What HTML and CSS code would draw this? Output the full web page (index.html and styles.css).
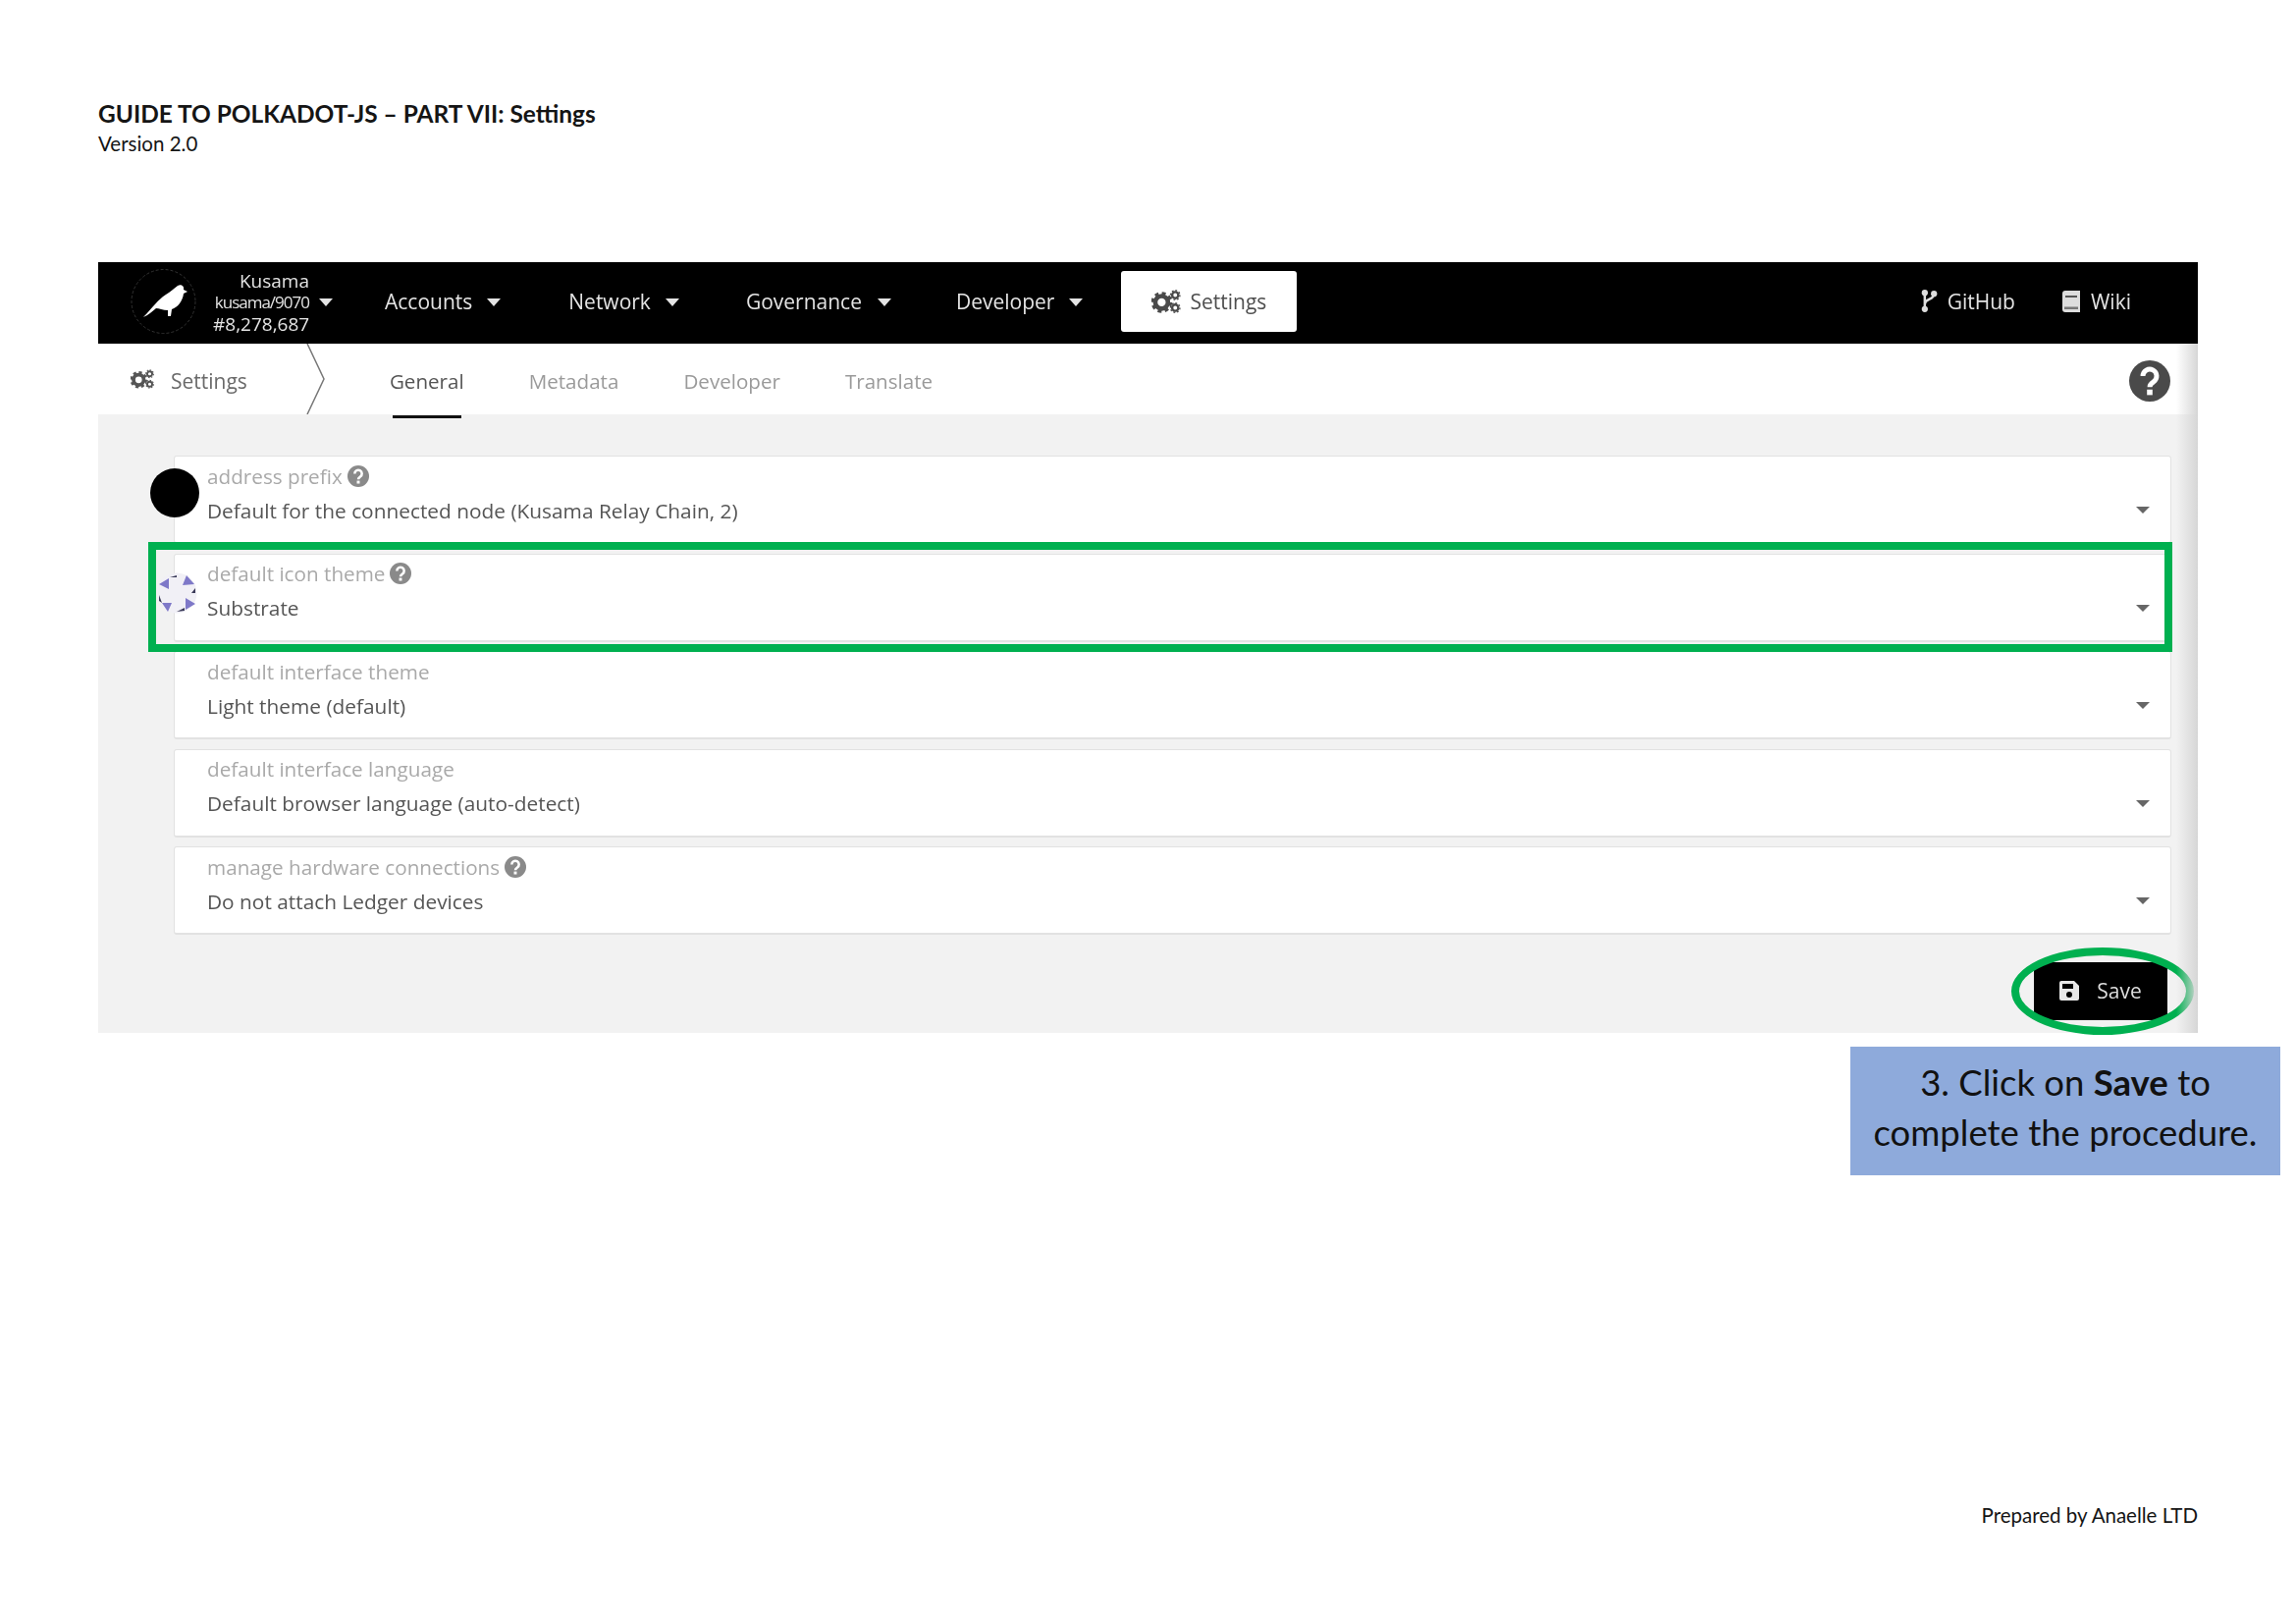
FILE: index.html
```html
<!DOCTYPE html>
<html lang="en">
<head>
<meta charset="utf-8">
<title>Guide to Polkadot-JS</title>
<link rel="stylesheet" href="styles.css">
</head>
<body>
<svg class="defs" width="0" height="0" aria-hidden="true">
  <defs>
    <symbol id="cogs" viewBox="0 0 32 26">
      <circle cx="11" cy="14" r="7" fill="none" stroke="currentColor" stroke-width="5"/>
      <circle cx="11" cy="14" r="10" fill="none" stroke="currentColor" stroke-width="3.4" stroke-dasharray="4.2 3.65"/>
      <circle cx="26" cy="6" r="3.4" fill="none" stroke="currentColor" stroke-width="2.6"/>
      <circle cx="26" cy="6" r="5.2" fill="none" stroke="currentColor" stroke-width="1.4" stroke-dasharray="2 2"/>
      <circle cx="26" cy="20" r="3.4" fill="none" stroke="currentColor" stroke-width="2.6"/>
      <circle cx="26" cy="20" r="5.2" fill="none" stroke="currentColor" stroke-width="1.4" stroke-dasharray="2 2"/>
    </symbol>
    <symbol id="help" viewBox="0 0 24 24">
      <circle cx="12" cy="12" r="12" fill="currentColor"/>
      <path d="M8 9.2a4 4 0 1 1 6.2 3.3c-1.4.9-2.2 1.5-2.2 3" fill="none" stroke="#fff" stroke-width="2.8"/>
      <rect x="10.4" y="17" width="3.2" height="3.2" fill="#fff"/>
    </symbol>
  </defs>
</svg>
<div class="page">
  <header class="doc-head">
    <h1 class="doc-title">GUIDE TO POLKADOT-JS – PART VII: Settings</h1>
    <p class="doc-version">Version 2.0</p>
  </header>

  <section class="app">
    <nav class="topbar">
      <div class="logo">
        <svg class="bird" viewBox="0 0 68 68" aria-hidden="true">
          <circle cx="33.500" cy="34" r="32.500" fill="none" stroke="#333" stroke-width="1" stroke-dasharray="3 2"/>
          <path d="M13 50 C22 41 28 32 36 27 C41 24 44 21 48 18 C52 16 55 19 54 22 L58 24 L54 26 C53 34 48 40 42 42 L41 49 L38 49 L38 43 C33 43 29 41 26 41 C22 44 18 48 13 50 Z" fill="#fff"/>
        </svg>
      </div>
      <div class="chain">
        <span class="chain-name">Kusama</span>
        <span class="chain-version">kusama/9070<i class="caret caret-chain"></i></span>
        <span class="chain-block">#8,278,687</span>
      </div>
      <a class="nav-item nav-accounts">Accounts<i class="caret"></i></a>
      <a class="nav-item nav-network">Network<i class="caret"></i></a>
      <a class="nav-item nav-governance">Governance<i class="caret"></i></a>
      <a class="nav-item nav-developer">Developer<i class="caret"></i></a>
      <a class="nav-active">
        <svg class="nav-cogs"><use href="#cogs"/></svg>Settings
      </a>
      <a class="nav-link nav-github">
        <svg class="icon-fork" viewBox="0 0 16 24" aria-hidden="true">
          <circle cx="4" cy="4" r="3" fill="#ddd"/><circle cx="4" cy="20" r="3" fill="#ddd"/><circle cx="13" cy="5" r="3" fill="#ddd"/>
          <path d="M4 4v16M13 5c0 6-9 5-9 10" fill="none" stroke="#ddd" stroke-width="2.400"/>
        </svg>GitHub
      </a>
      <a class="nav-link nav-wiki">
        <svg class="icon-book" viewBox="0 0 18 22" aria-hidden="true">
          <path d="M3 0h15v22H3a3 3 0 0 1-3-3V3a3 3 0 0 1 3-3z" fill="#ddd"/>
          <rect x="3" y="5" width="12" height="2" fill="#555"/><rect x="2" y="16.500" width="14" height="2.500" fill="#777"/>
        </svg>Wiki
      </a>
    </nav>

    <div class="subbar">
      <svg class="sub-cogs"><use href="#cogs"/></svg>
      <span class="sub-title">Settings</span>
      <svg class="sub-chevron" viewBox="0 0 20 72" aria-hidden="true"><path d="M1 0 L18 36 L1 72" fill="none" stroke="#777" stroke-width="1.500"/></svg>
      <a class="tab tab-current">General</a>
      <a class="tab">Metadata</a>
      <a class="tab">Developer</a>
      <a class="tab">Translate</a>
      <svg class="sub-help"><use href="#help"/></svg>
    </div>

    <div class="content">
      <div class="field">
        <span class="identicon-black"></span>
        <div class="field-text">
          <label class="field-label">address prefix<svg class="help"><use href="#help"/></svg></label>
          <span class="field-value">Default for the connected node (Kusama Relay Chain, 2)</span>
        </div>
        <i class="select-caret"></i>
      </div>
      <div class="field">
        <svg class="identicon-sub" viewBox="0 0 42 42" aria-hidden="true">
          <circle cx="21" cy="21" r="20.500" fill="#f1f0f6"/>
          <path d="M31 3 L27 13 L39 12 Z M13 6 L3 12 L13 17 Z M6 31 L16 31 L12 40 Z M30 26 L40 32 L30 38 Z" fill="#7e78c8"/>
          <path d="M14 5 L21 3 L21 5 Z M36 21 L40 16 L40 21 Z M3 23 L6 31 L3 29 Z M21 40 L29 36 L29 39 Z" fill="#3a3a58"/>
        </svg>
        <div class="field-text">
          <label class="field-label">default icon theme<svg class="help"><use href="#help"/></svg></label>
          <span class="field-value">Substrate</span>
        </div>
        <i class="select-caret"></i>
        <span class="mark-rect"></span>
      </div>
      <div class="field">
        <div class="field-text">
          <label class="field-label">default interface theme</label>
          <span class="field-value">Light theme (default)</span>
        </div>
        <i class="select-caret"></i>
      </div>
      <div class="field">
        <div class="field-text">
          <label class="field-label">default interface language</label>
          <span class="field-value">Default browser language (auto-detect)</span>
        </div>
        <i class="select-caret"></i>
      </div>
      <div class="field">
        <div class="field-text">
          <label class="field-label">manage hardware connections<svg class="help"><use href="#help"/></svg></label>
          <span class="field-value">Do not attach Ledger devices</span>
        </div>
        <i class="select-caret"></i>
      </div>
      <div class="actions">
        <button class="save" type="button">
          <svg class="icon-save" viewBox="0 0 20 20" aria-hidden="true">
            <path d="M2 0h13l5 5v13a2 2 0 0 1-2 2H2a2 2 0 0 1-2-2V2a2 2 0 0 1 2-2z" fill="#e8e8e8"/>
            <rect x="3" y="3" width="11" height="5" fill="#000"/><circle cx="10" cy="14" r="3" fill="#000"/>
          </svg>Save
          <span class="mark-ellipse"></span>
        </button>
      </div>
    </div>
  </section>

  <div class="callout-row">
    <p class="callout">3. Click on <b>Save</b> to<br>complete the procedure.</p>
  </div>

  <footer class="doc-foot">Prepared by Anaelle LTD</footer>
</div>
</body>
</html>
```
FILE: styles.css
```css
* { box-sizing: border-box; }
html, body { margin: 0; padding: 0; background: #fff; }
body { width: 2339px; height: 1654px; overflow: hidden; font-family: "Lato", "Liberation Sans", sans-serif; color: #111; }
.defs { position: absolute; }
.page { padding: 102px 16px 0 100px; }

.doc-head { height: 165px; }
.doc-title { margin: 0; font-size: 24.450px; line-height: 28px; font-weight: 700; color: #151515; }
.doc-version { margin: 3px 0 0; font-size: 20.500px; line-height: 26px; color: #151515; }

.app { width: 2139px; font-family: "Open Sans", "Noto Sans", sans-serif; background: #f2f2f2; position: relative; filter: blur(.4px); }
.app::after { content: ""; position: absolute; right: 0; top: 83px; bottom: 0; width: 22px; background: linear-gradient(to right, rgba(200,200,200,0), #d6d6d6); pointer-events: none; }

.topbar { height: 83px; background: #000; display: flex; align-items: center; padding: 0 0 4px 33px; color: #e4e4e4; font-size: 21px; }
.logo { width: 68px; height: 68px; flex: none; }
.bird { width: 68px; height: 68px; display: block; }
.chain { width: 118px; margin: 3px 0 0 16px; display: flex; flex-direction: column; align-items: flex-start; font-size: 19px; line-height: 22px; position: relative; }
.chain span { display: block; width: 98px; text-align: right; white-space: nowrap; }
.chain-version { font-size: 17px; letter-spacing: -1px; }
.caret { display: inline-block; width: 0; height: 0; border-left: 7.500px solid transparent; border-right: 7.500px solid transparent; border-top: 8px solid #e4e4e4; margin-left: 15px; vertical-align: 3px; }
.caret-chain { position: absolute; right: -4px; top: 29px; margin: 0; }
.nav-item { white-space: nowrap; }
.nav-accounts { margin-left: 57px; }
.nav-network { margin-left: 69px; }
.nav-governance { margin-left: 68px; }
.nav-developer { margin-left: 66px; }
.nav-governance .caret { margin-left: 16px; }
.nav-active { margin-left: 39px; width: 179px; height: 62px; background: #fff; color: #4e4e4e; border-radius: 3px; display: flex; align-items: center; justify-content: center; gap: 9px; }
.nav-cogs { width: 30px; height: 24px; color: #4a4a4a; }
.nav-link { display: flex; align-items: center; white-space: nowrap; }
.nav-github { margin-left: auto; gap: 10px; }
.nav-wiki { margin-left: 48px; margin-right: 68px; gap: 11px; }
.icon-fork { width: 18px; height: 25px; }
.icon-book { width: 18px; height: 22px; }

.subbar { height: 72px; background: #fff; display: flex; align-items: center; padding-left: 33px; font-size: 21px; color: #9a9a9a; position: relative; }
.sub-cogs { width: 24px; height: 20px; color: #555; margin-bottom: 1px; }
.sub-title { margin-left: 17px; color: #6a6a6a; padding-top: 4px; }
.sub-chevron { width: 20px; height: 72px; margin-left: 60px; flex: none; }
.tab { margin-left: 66px; position: relative; font-size: 20.600px; padding-top: 4px; }
.sub-chevron + .tab { margin-left: 65px; }
.tab-current { color: #555; }
.tab-current::after { content: ""; position: absolute; left: 3px; right: 3px; bottom: -24px; height: 3px; background: #111; }
.sub-help { width: 42px; height: 42px; margin: 4px 28px 0 auto; color: #4a4a4a; }

.content { padding: 42px 27px 13px 77px; display: flex; flex-direction: column; gap: 9.500px; }
.field { height: 90px; background: #fff; border: 1px solid #e2e2e2; border-bottom-width: 2px; border-radius: 3px; padding: 0 0 0 33px; display: flex; align-items: center; position: relative; }
.field-text { display: flex; flex-direction: column; gap: 10px; flex: 1; padding-bottom: 12px; }
.field-label { font-size: 20.700px; line-height: 24px; color: #a9a9a9; display: flex; align-items: center; gap: 5px; }
.field-value { font-size: 20.850px; line-height: 26px; color: #555; }
.help { width: 22px; height: 22px; color: #8a8a8a; }
.select-caret { width: 0; height: 0; border-left: 7px solid transparent; border-right: 7px solid transparent; border-top: 7px solid #666; margin: 22px 21px 0 0; }

.identicon-black { position: absolute; left: -25px; top: 12px; width: 50px; height: 50px; border-radius: 50%; background: #000; }
.identicon-sub { position: absolute; left: -19px; top: 18px; width: 42px; height: 42px; z-index: 1; }

.mark-rect { position: absolute; left: -27px; right: -2px; top: -13px; bottom: -12px; border: 8px solid #00b050; z-index: 2; pointer-events: none; }

.actions { display: flex; justify-content: flex-end; padding: 18px 4px 0 0; }
.save { height: 59px; width: 136px; background: #000; border: 0; border-radius: 4px; color: #ddd; font-family: inherit; font-size: 21px; display: flex; align-items: center; justify-content: center; gap: 18px; position: relative; }
.icon-save { width: 20px; height: 20px; }
.mark-ellipse { position: absolute; left: -23px; right: -27px; top: -15px; bottom: -15px; border: 8px solid #00b050; border-radius: 50%; pointer-events: none; }

.callout-row { display: flex; justify-content: flex-end; margin-top: 14px; }
.callout { margin: 0; width: 438px; height: 131px; background: #8eaadb; text-align: center; font-size: 36.500px; line-height: 51px; color: #111; padding-top: 11px; }

.doc-foot { width: 2139px; margin-top: 333px; text-align: right; font-size: 20.500px; line-height: 26px; color: #151515; }
```
